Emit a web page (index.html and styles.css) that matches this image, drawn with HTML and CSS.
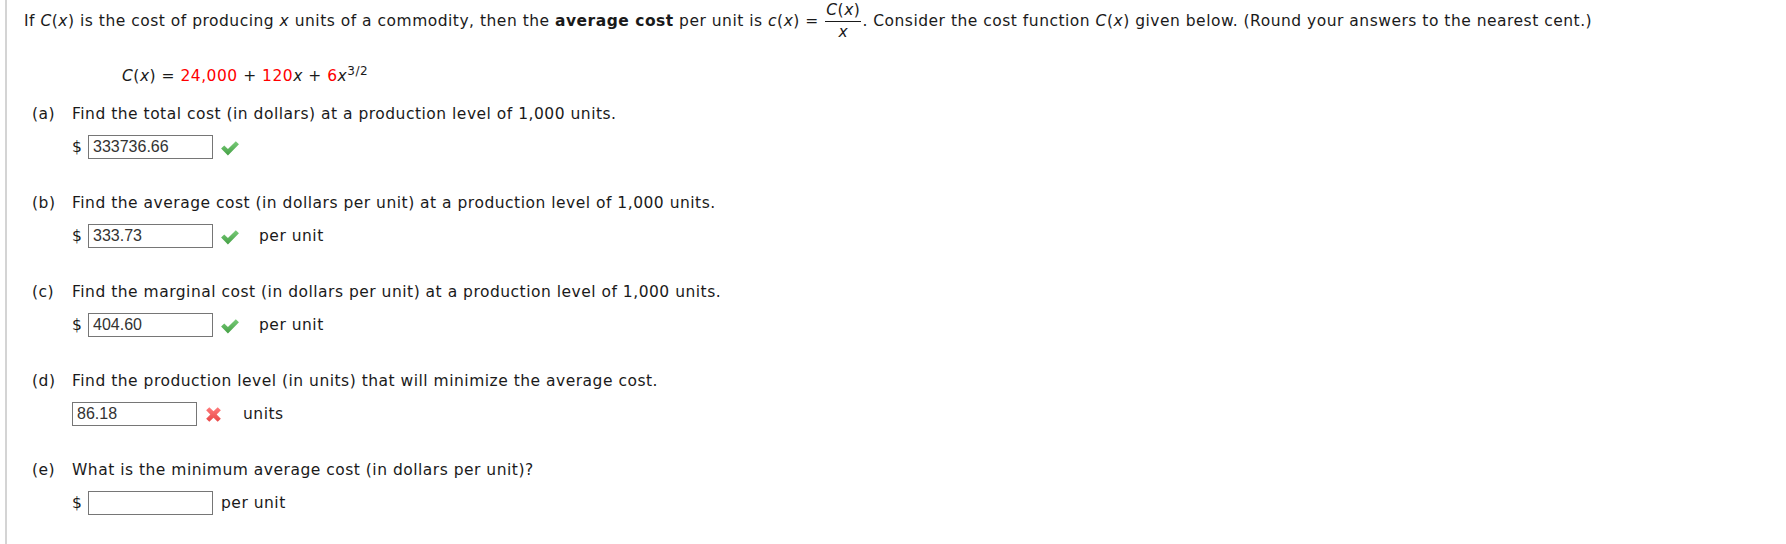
FILE: index.html
```html
<!DOCTYPE html>
<html lang="en">
<head>
  <meta charset="UTF-8" />
  <title>Average cost</title>
  <link rel="stylesheet" href="styles.css">
</head>
<body>
  <svg class="defs" width="0" height="0">
    <linearGradient id="ok" x1="0" y1="0" x2="0" y2="1">
      <stop offset="0" stop-color="#7acc7a"/>
      <stop offset="1" stop-color="#45a045"/>
    </linearGradient>
    <linearGradient id="bad" x1="0" y1="0" x2="0" y2="1">
      <stop offset="0" stop-color="#ff7b7b"/>
      <stop offset="1" stop-color="#e84848"/>
    </linearGradient>
  </svg>

  <div class="question">
    <p class="intro">
      If <i>C</i>(<i>x</i>) is the cost of producing <i>x</i> units of a commodity, then the <b>average cost</b> per unit is <i>c</i>(<i>x</i>) =
      <span class="frac"><span class="num"><i>C</i>(<i>x</i>)</span><span class="den"><i>x</i></span></span>. Consider the cost function <i>C</i>(<i>x</i>) given below. (Round your answers to the nearest cent.)
    </p>

    <p class="formula">
      <i>C</i>(<i>x</i>) = <span class="red">24,000</span> + <span class="red">120</span><i>x</i> + <span class="red">6</span><i>x</i><sup>3/2</sup>
    </p>

    <!-- (a) -->
    <div class="part">
      <div class="part-head"><span class="label">(a)</span>Find the total cost (in dollars) at a production level of 1,000 units.</div>
      <div class="answer">
        <span class="cur">$</span><input type="text" value="333736.66">
        <svg class="mark" viewBox="0 0 20 20"><path d="M2 11 L5 8 L8.5 11.5 L16 4 L19 7 L8.5 17.5 Z" fill="url(#ok)"/></svg>
      </div>
    </div>

    <!-- (b) -->
    <div class="part">
      <div class="part-head"><span class="label">(b)</span>Find the average cost (in dollars per unit) at a production level of 1,000 units.</div>
      <div class="answer">
        <span class="cur">$</span><input type="text" value="333.73">
        <svg class="mark" viewBox="0 0 20 20"><path d="M2 11 L5 8 L8.5 11.5 L16 4 L19 7 L8.5 17.5 Z" fill="url(#ok)"/></svg>
        <span class="unit">per unit</span>
      </div>
    </div>

    <!-- (c) -->
    <div class="part">
      <div class="part-head"><span class="label">(c)</span>Find the marginal cost (in dollars per unit) at a production level of 1,000 units.</div>
      <div class="answer">
        <span class="cur">$</span><input type="text" value="404.60">
        <svg class="mark" viewBox="0 0 20 20"><path d="M2 11 L5 8 L8.5 11.5 L16 4 L19 7 L8.5 17.5 Z" fill="url(#ok)"/></svg>
        <span class="unit">per unit</span>
      </div>
    </div>

    <!-- (d) -->
    <div class="part">
      <div class="part-head"><span class="label">(d)</span>Find the production level (in units) that will minimize the average cost.</div>
      <div class="answer">
        <input type="text" value="86.18">
        <svg class="mark" viewBox="0 0 20 20"><path d="M3 6 L6 3 L10 7 L14 3 L17 6 L13 10 L17 14 L14 17 L10 13 L6 17 L3 14 L7 10 Z" fill="url(#bad)"/></svg>
        <span class="unit">units</span>
      </div>
    </div>

    <!-- (e) -->
    <div class="part">
      <div class="part-head"><span class="label">(e)</span>What is the minimum average cost (in dollars per unit)?</div>
      <div class="answer">
        <span class="cur">$</span><input type="text" value="">
        <span class="unit plain">per unit</span>
      </div>
    </div>
  </div>
</body>
</html>
```

FILE: styles.css
```css
* { box-sizing: border-box; }

body {
  margin: 0;
  background: #fff;
  color: #1a1a1a;
  font-family: "DejaVu Sans", Verdana, sans-serif;
  font-size: 15.5px;
  letter-spacing: 0.5px;
}

.defs {
  position: absolute;
}

.question {
  margin-left: 5px;
  min-height: 544px;
  border-left: 2px solid #d4d4d4;
  padding: 0 0 0 17px;
}

.intro {
  margin: 0;
  line-height: 30px;
}

.frac {
  display: inline-flex;
  flex-direction: column;
  align-items: center;
  vertical-align: middle;
  line-height: 21px;
  margin: 0 1px;
}

.frac .num {
  border-bottom: 1px solid #1a1a1a;
  padding: 0 1px;
}

.formula {
  margin: 21px 0 0 98px;
  line-height: 24px;
}

.formula sup {
  font-size: 12px;
  line-height: 0;
}

.red { color: #f00; }

.part {
  margin: 16px 0 0 8px;
}

.part-head {
  display: flex;
  line-height: 20px;
}

.label {
  width: 40px;
  flex: none;
}

.answer {
  display: flex;
  align-items: center;
  margin: 10px 0 0 40px;
  height: 26px;
}

.cur {
  width: 16px;
}

input {
  width: 125px;
  height: 24px;
  border: 1px solid #767676;
  padding: 0 4px;
  font-family: "Liberation Sans", Arial, sans-serif;
  font-size: 16px;
  letter-spacing: 0;
  color: #333;
  margin: 0;
}

.mark {
  width: 21px;
  height: 21px;
  margin-left: 6px;
}

.unit {
  margin-left: 19px;
}

.unit.plain {
  margin-left: 8px;
}

.part + .part {
  margin-top: 33px;
}
```
